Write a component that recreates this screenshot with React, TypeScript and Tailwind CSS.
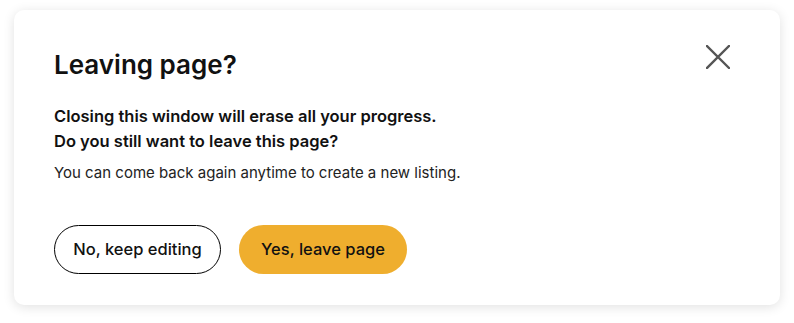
import React from "react";

export default function App() {
  return (
    <div className="w-[794px] h-[323px] bg-white pl-[14px] pt-[10px] pr-[14px] pb-[18px]" style={{ fontFamily: "Inter, 'Noto Sans', sans-serif" }}>
      <div className="relative h-full bg-white rounded-[10px] shadow-[0_2px_12px_rgba(0,0,0,0.12)] pl-[40px] pt-[39px]">
        <button className="absolute left-[692px] top-[35px] w-[24px] h-[24px] text-[#555]" aria-label="Close">
          <svg viewBox="0 0 24 24" width="24" height="24" fill="none" stroke="currentColor" strokeWidth="2.4" strokeLinecap="square">
            <path d="M1 1L23 23M23 1L1 23" />
          </svg>
        </button>
        <h2 className="text-[26px] leading-[32px] font-semibold text-[#111]">Leaving page?</h2>
        <p className="mt-[23px] text-[16.5px] leading-[25px] font-semibold text-[#111]">
          Closing this window will erase all your progress.
          <br />
          Do you still want to leave this page?
        </p>
        <p className="mt-[9px] text-[15px] leading-[20px] text-[#222]">You can come back again anytime to create a new listing.</p>
        <div className="mt-[42px] flex gap-[18px]">
          <button className="w-[167px] h-[49px] rounded-full border border-black text-[16.5px] font-medium text-[#111]">No, keep editing</button>
          <button className="w-[168px] h-[49px] rounded-full bg-[#EFAE2E] text-[16.5px] font-medium text-[#111]">Yes, leave page</button>
        </div>
      </div>
    </div>
  );
}
